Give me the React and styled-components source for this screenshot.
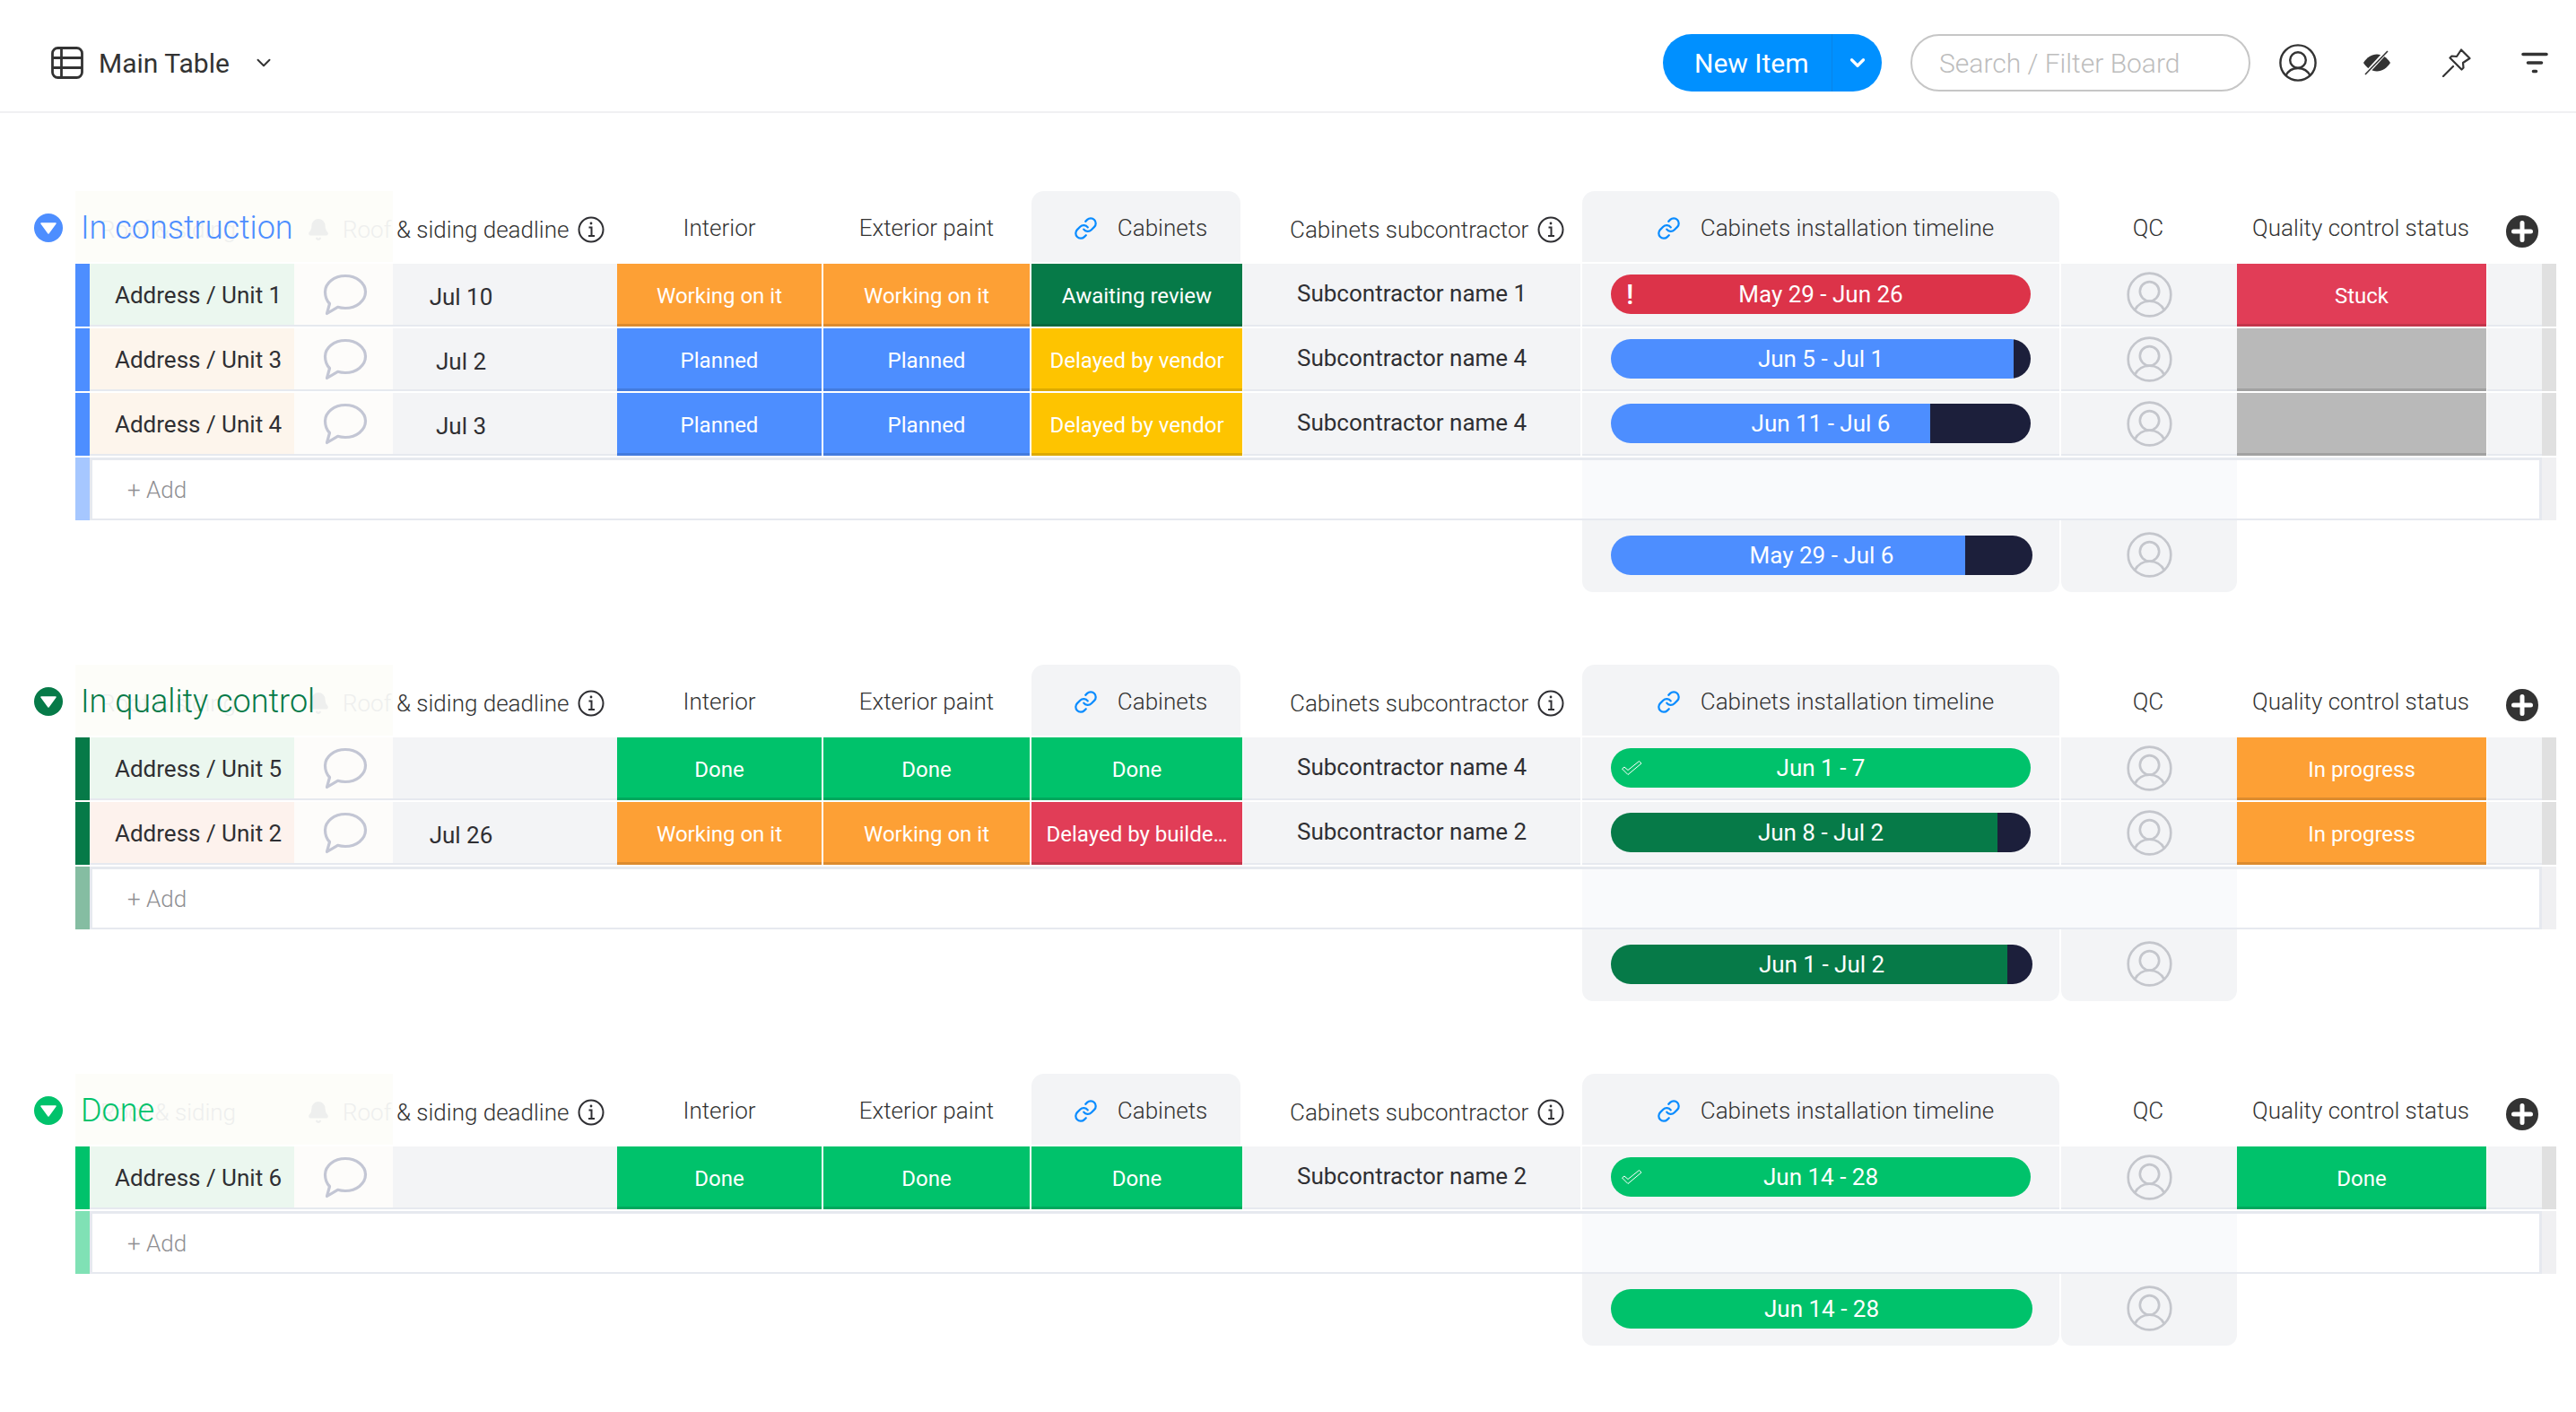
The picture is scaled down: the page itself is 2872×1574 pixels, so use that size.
import styled, { createGlobalStyle } from "styled-components";
import { Bell, ChevronDown, Link } from "lucide-react";

const COLUMNS = "84px 16px 228px 110px 250px 230px 232px 235px 379px 534px 196px 278px 62px 16px";

const BLUE = "#4d8eff";
const DARK_GREEN = "#067a48";
const GREEN = "#00c26b";
const ORANGE = "#fda035";
const YELLOW = "#fec400";
const RED = "#e13d57";
const GREY = "#b9b9b9";
const PILL_RED = "#dc3349";

const GlobalStyle = createGlobalStyle`
  html, body {
    margin: 0;
    background: #fff;
    font-family: Roboto, "Liberation Sans", sans-serif;
    color: #2f2f33;
  }
  * {
    box-sizing: border-box;
  }
`;

const Page = styled.div`
  width: 2872px;
  min-height: 1574px;
  overflow: hidden;
`;

const Toolbar = styled.header`
  height: 126px;
  display: flex;
  align-items: center;
  padding: 16px 31px 0 57px;
  border-bottom: 2px solid #f0f0f2;
`;

const BoardName = styled.div`
  display: flex;
  align-items: center;
  font-size: 30px;
  color: #333;
`;

const BoardLabel = styled.span`
  margin: 0 25px 0 17px;
`;

const ToolbarRight = styled.div`
  margin-left: auto;
  display: flex;
  align-items: center;
`;

const NewItem = styled.div`
  width: 244px;
  height: 64px;
  display: flex;
  align-items: center;
  border-radius: 32px;
  background: #0090ff;
  color: #fff;
  font-size: 30px;
`;

const NewItemLabel = styled.span`
  width: 189px;
  height: 100%;
  display: flex;
  align-items: center;
  padding-left: 35px;
  border-right: 1px solid #0a84e6;
`;

const NewItemArrow = styled.span`
  flex: 1;
  display: flex;
  justify-content: center;
`;

const SearchBox = styled.div`
  width: 379px;
  height: 64px;
  margin: 0 32px;
  padding-left: 30px;
  display: flex;
  align-items: center;
  border: 2px solid #c6c6c6;
  border-radius: 32px;
  color: #bdbdbd;
  font-size: 30px;
  font-weight: 300;
`;

const ToolIcon = styled.span`
  width: ${(props) => props.$w}px;
  margin-right: ${(props) => props.$gap || 0}px;
  display: flex;
`;

const Board = styled.main`
  padding-top: 87px;
`;

const Group = styled.section`
  margin-bottom: 81px;
`;

const Grid = styled.div`
  display: grid;
  grid-template-columns: ${COLUMNS};
`;

const HeaderRow = styled(Grid)`
  height: 79px;
  margin-bottom: 2px;
  font-size: 26px;
  font-weight: 300;
  color: #333;
`;

const Collapse = styled.div`
  width: 32px;
  height: 32px;
  margin: 25px 0 0 38px;
  border-radius: 50%;
  background: ${(props) => props.$color};
  display: flex;
  align-items: center;
  justify-content: center;
`;

const TitleCell = styled.div`
  grid-column: 2 / 5;
  position: relative;
  background: #fdfdf9;
  padding: 18px 0 0 6px;
`;

const Title = styled.h2`
  position: relative;
  margin: 0;
  font-size: 36px;
  font-weight: 300;
  line-height: 46px;
  white-space: nowrap;
  color: ${(props) => props.$color};
`;

const Ghost = styled.div`
  position: absolute;
  inset: 0;
  padding: 25px 0 0 28px;
  display: flex;
  align-items: flex-start;
  overflow: hidden;
  font-size: 26px;
  font-weight: 300;
  line-height: 36px;
  color: #eeefee;
  white-space: nowrap;
`;

const GhostRight = styled.span`
  margin-left: auto;
  display: flex;
  align-items: center;
  gap: 14px;
  width: 96px;
  flex-shrink: 0;

  svg {
    flex-shrink: 0;
  }
`;

const HeaderCell = styled.div`
  display: flex;
  align-items: center;
  justify-content: ${(props) => props.$align || "center"};
  gap: ${(props) => props.$gap || 0}px;
  padding: ${(props) => props.$pad || "3px 0 0"};
  white-space: nowrap;
  margin-right: 2px;
`;

const Tab = styled(HeaderCell)`
  background: #f3f4f6;
  border-radius: 14px 14px 0 0;
  gap: 22px;
  padding: 3px 0 0 10px;
`;

const PlusCell = styled.div`
  grid-column: 13;
  display: flex;
  justify-content: flex-end;
  padding: 27px 4px 0 0;
`;

const Row = styled(Grid)`
  height: 70px;
  margin-bottom: 2px;
  font-size: 26px;
`;

const Bar = styled.div`
  grid-column: 2;
  background: ${(props) => props.$color};
`;

const NameCell = styled.div`
  display: flex;
  align-items: center;
  padding-left: 28px;
  background: ${(props) => props.$tint};
  box-shadow: inset 0 -2px 0 #e6e9ef;
  white-space: nowrap;
`;

const CommentCell = styled.div`
  display: flex;
  align-items: center;
  padding-left: 32px;
  background: #fdfcfa;
  box-shadow: inset 0 -2px 0 #e6e9ef;
`;

const GreyCell = styled.div`
  display: flex;
  align-items: center;
  background: #f3f4f6;
  box-shadow: inset 0 -2px 0 #e6e9ef;
`;

const DateCell = styled(GreyCell)`
  justify-content: center;
  padding: 3px 98px 0 0;
`;

const SubCell = styled(GreyCell)`
  margin: 0 2px 0 1px;
  padding: 0 0 4px 60px;
`;

const TimelineCell = styled(GreyCell)`
  padding: 0 32px 2px;
  margin-right: 2px;
`;

const QcCell = styled(GreyCell)`
  justify-content: center;
  padding-bottom: 2px;
`;

const TailCell = styled(GreyCell)`
  margin-left: 1px;
`;

const ScrollEdge = styled.div`
  background: ${(props) => props.$color || "#e0e0e0"};
`;

const Status = styled.div`
  display: flex;
  align-items: center;
  justify-content: center;
  margin-right: ${(props) => (props.$flush ? 0 : 2)}px;
  padding-top: 2px;
  background: ${(props) => props.$color};
  box-shadow: inset 0 -3px 0 rgba(0, 0, 0, 0.13);
  color: #fff;
  font-size: 24px;
  white-space: nowrap;
`;

const Pill = styled.div`
  position: relative;
  width: 100%;
  height: 44px;
  display: flex;
  align-items: center;
  justify-content: center;
  border-radius: 22px;
  background: ${(props) =>
    props.$fill
      ? `linear-gradient(90deg, ${props.$color} ${props.$fill}%, #1c1f3b ${props.$fill}%)`
      : props.$color};
  color: #fff;
  font-size: 26px;
`;

const PillMark = styled.span`
  position: absolute;
  left: ${(props) => props.$left}px;
  top: 50%;
  transform: translateY(-50%);
  display: flex;
  font-size: 32px;
  font-weight: 500;
`;

const AddRow = styled(Grid)`
  height: 70px;
  font-size: 26px;
  font-weight: 300;
  color: #8f8f93;
`;

const AddMain = styled.div`
  grid-column: 3 / 10;
  display: flex;
  align-items: center;
  padding-left: 39px;
  border: solid #e6e9ef;
  border-width: 3px 0 2px 3px;
`;

const AddTint = styled.div`
  grid-column: 10 / 12;
  background: #f9fafc;
  border: solid #e6e9ef;
  border-width: 3px 0 2px;
`;

const AddEnd = styled.div`
  grid-column: 12 / 14;
  border: solid #e6e9ef;
  border-width: 3px 3px 2px 0;
`;

const SummaryRow = styled(Grid)`
  height: 80px;
`;

const SummaryTimeline = styled.div`
  grid-column: 10;
  margin-right: 2px;
  padding: 0 30px 3px 32px;
  display: flex;
  align-items: center;
  background: #f3f4f6;
  border-radius: 0 0 12px 12px;
`;

const SummaryQc = styled(SummaryTimeline)`
  grid-column: 11;
  margin: 0;
  padding: 0 0 3px;
  justify-content: center;
`;

const TableIcon = () => (
  <svg width="36" height="36" viewBox="0 0 36 36" fill="none" stroke="#333" strokeWidth="2.8">
    <rect x="1.5" y="1.5" width="33" height="33" rx="6" />
    <path d="M11.500 1.500v33M1.500 12.500h33M1.500 23.500h33" />
  </svg>
);

const UserIcon = ({ size = 42, color = "#333", width = 2.4 }) => (
  <svg width={size} height={size} viewBox="0 0 42 42" fill="none" stroke={color} strokeWidth={width}>
    <circle cx="21" cy="21" r="19.6" />
    <circle cx="21" cy="18" r="8.8" />
    <path d="M7.300 35.500C10 30 15 27 21 27s11 3 13.700 8.500" />
  </svg>
);

const EyeOffIcon = () => (
  <svg width="32" height="28" viewBox="0 0 32 28">
    <path d="M1 14C5 8 10 4.500 16 4.500S27 8 31 14c-4 6-9 9.500-15 9.500S5 20 1 14z" fill="#333" />
    <path d="M27 1L4 26" stroke="#fff" strokeWidth="4.500" />
    <path d="M28 1L3 27" stroke="#333" strokeWidth="1.600" />
  </svg>
);

const PinIcon = () => (
  <svg width="32" height="32" viewBox="0 0 32 32" fill="none" stroke="#333" strokeWidth="2.200" strokeLinejoin="round" strokeLinecap="round">
    <path d="M1 31l11-11" />
    <path d="M21 1.500l9.500 9.500-7.500 5 .5 5.500-2 2-13-13 2-2 5.500.5z" />
  </svg>
);

const FilterIcon = () => (
  <svg width="30" height="24" viewBox="0 0 30 24" fill="none" stroke="#333" strokeWidth="3.600" strokeLinecap="round">
    <path d="M2 2.500h26M7.500 12h15M13.500 21.500h3" />
  </svg>
);

const InfoIcon = () => (
  <svg width="30" height="30" viewBox="0 0 30 30" fill="none" stroke="#2f2f33" strokeWidth="2">
    <circle cx="15" cy="15" r="13.500" />
    <path d="M12.500 12.500H15.500V22M12 22h7" />
    <circle cx="15" cy="8" r="1.400" fill="#2f2f33" stroke="none" />
  </svg>
);

const PlusIcon = () => (
  <svg width="36" height="36" viewBox="0 0 36 36">
    <circle cx="18" cy="18" r="18" fill="#333" />
    <path d="M18 8.500v19M8.500 18h19" stroke="#fff" strokeWidth="5" strokeLinecap="round" />
  </svg>
);

const CommentIcon = () => (
  <svg width="50" height="48" viewBox="0 0 50 48" fill="none" stroke="#c3c6d4" strokeWidth="3.200" strokeLinejoin="round">
    <path d="M25 2.500c12.500 0 22.500 7.800 22.500 17.800S37.500 38.500 25 38.500c-3 0-6-.4-8.500-1.200L4.500 44.500l3-11C4 30 2.500 25.500 2.500 20.300 2.500 10.300 12.500 2.500 25 2.500z" />
  </svg>
);

const CheckIcon = () => (
  <svg width="24" height="18" viewBox="0 0 24 18" fill="none" stroke="#fff" strokeWidth="1" strokeLinejoin="round">
    <path d="M1.500 10l2.500-2 4 3.500L20.500 1.500l2.500 2.500L8 16.500z" />
  </svg>
);

const Arrow = () => (
  <svg width="18" height="14" viewBox="0 0 18 14">
    <path d="M1 2h16L9 13z" fill="#fff" stroke="#fff" strokeWidth="1.500" strokeLinejoin="round" />
  </svg>
);

const Avatar = () => <UserIcon size={51} color="#c4c6cc" width={2.2} />;

const groups = [
  {
    title: "In construction",
    color: BLUE,
    addColor: "#a6c7ff",
    rows: [
      {
        name: "Address / Unit 1",
        tint: "#ebf7ef",
        date: "Jul 10",
        interior: ["Working on it", ORANGE],
        exterior: ["Working on it", ORANGE],
        cabinets: ["Awaiting review", DARK_GREEN],
        sub: "Subcontractor name 1",
        pill: { text: "May 29 - Jun 26", color: PILL_RED, mark: "!" },
        qc: ["Stuck", RED],
      },
      {
        name: "Address / Unit 3",
        tint: "#fdf5ec",
        date: "Jul 2",
        interior: ["Planned", BLUE],
        exterior: ["Planned", BLUE],
        cabinets: ["Delayed by vendor", YELLOW],
        sub: "Subcontractor name 4",
        pill: { text: "Jun 5 - Jul 1", color: BLUE, fill: 96 },
        qc: ["", GREY],
      },
      {
        name: "Address / Unit 4",
        tint: "#fdf5ec",
        date: "Jul 3",
        interior: ["Planned", BLUE],
        exterior: ["Planned", BLUE],
        cabinets: ["Delayed by vendor", YELLOW],
        sub: "Subcontractor name 4",
        pill: { text: "Jun 11 - Jul 6", color: BLUE, fill: 76 },
        qc: ["", GREY],
      },
    ],
    summary: { text: "May 29 - Jul 6", color: BLUE, fill: 84 },
  },
  {
    title: "In quality control",
    color: DARK_GREEN,
    addColor: "#85bda2",
    rows: [
      {
        name: "Address / Unit 5",
        tint: "#ebf7ef",
        date: "",
        interior: ["Done", GREEN],
        exterior: ["Done", GREEN],
        cabinets: ["Done", GREEN],
        sub: "Subcontractor name 4",
        pill: { text: "Jun 1 - 7", color: GREEN, check: true },
        qc: ["In progress", ORANGE],
      },
      {
        name: "Address / Unit 2",
        tint: "#fdf2ed",
        date: "Jul 26",
        interior: ["Working on it", ORANGE],
        exterior: ["Working on it", ORANGE],
        cabinets: ["Delayed by builde…", RED],
        sub: "Subcontractor name 2",
        pill: { text: "Jun 8 - Jul 2", color: DARK_GREEN, fill: 92 },
        qc: ["In progress", ORANGE],
      },
    ],
    summary: { text: "Jun 1 - Jul 2", color: DARK_GREEN, fill: 94 },
  },
  {
    title: "Done",
    color: GREEN,
    addColor: "#80e1b5",
    rows: [
      {
        name: "Address / Unit 6",
        tint: "#ebf7ef",
        date: "",
        interior: ["Done", GREEN],
        exterior: ["Done", GREEN],
        cabinets: ["Done", GREEN],
        sub: "Subcontractor name 2",
        pill: { text: "Jun 14 - 28", color: GREEN, check: true },
        qc: ["Done", GREEN],
      },
    ],
    summary: { text: "Jun 14 - 28", color: GREEN },
  },
];

const TimelinePill = ({ pill }) => (
  <Pill $color={pill.color} $fill={pill.fill}>
    {pill.mark && <PillMark $left={17}>{pill.mark}</PillMark>}
    {pill.check && (
      <PillMark $left={11}>
        <CheckIcon />
      </PillMark>
    )}
    {pill.text}
  </Pill>
);

const GroupHead = ({ group }) => (
  <HeaderRow>
    <Collapse $color={group.color}>
      <Arrow />
    </Collapse>
    <TitleCell>
      <Ghost>
        Roof &amp; siding
        <GhostRight>
          <Bell size={26} fill="#eeefee" stroke="#eeefee" />
          Roof
        </GhostRight>
      </Ghost>
      <Title $color={group.color}>{group.title}</Title>
    </TitleCell>
    <HeaderCell $align="flex-start" $gap={10} $pad="6px 0 0 4px">
      &amp; siding deadline
      <InfoIcon />
    </HeaderCell>
    <HeaderCell>Interior</HeaderCell>
    <HeaderCell>Exterior paint</HeaderCell>
    <Tab>
      <Link size={27} color="#0a8cff" strokeWidth={2} />
      Cabinets
    </Tab>
    <HeaderCell $align="flex-start" $gap={10} $pad="6px 0 0 53px">
      Cabinets subcontractor
      <InfoIcon />
    </HeaderCell>
    <Tab>
      <Link size={27} color="#0a8cff" strokeWidth={2} />
      Cabinets installation timeline
    </Tab>
    <HeaderCell>QC</HeaderCell>
    <HeaderCell>Quality control status</HeaderCell>
    <PlusCell>
      <PlusIcon />
    </PlusCell>
  </HeaderRow>
);

const ItemRow = ({ row, color }) => (
  <Row>
    <Bar $color={color} />
    <NameCell $tint={row.tint}>{row.name}</NameCell>
    <CommentCell>
      <CommentIcon />
    </CommentCell>
    <DateCell>{row.date}</DateCell>
    <Status $color={row.interior[1]}>{row.interior[0]}</Status>
    <Status $color={row.exterior[1]}>{row.exterior[0]}</Status>
    <Status $color={row.cabinets[1]} $flush>
      {row.cabinets[0]}
    </Status>
    <SubCell>{row.sub}</SubCell>
    <TimelineCell>
      <TimelinePill pill={row.pill} />
    </TimelineCell>
    <QcCell>
      <Avatar />
    </QcCell>
    <Status $color={row.qc[1]} $flush>
      {row.qc[0]}
    </Status>
    <TailCell />
    <ScrollEdge />
  </Row>
);

const App = () => {
  return (
    <Page>
      <GlobalStyle />
      <Toolbar>
        <BoardName>
          <TableIcon />
          <BoardLabel>Main Table</BoardLabel>
          <ChevronDown size={26} color="#333" strokeWidth={1.8} />
        </BoardName>
        <ToolbarRight>
          <NewItem>
            <NewItemLabel>New Item</NewItemLabel>
            <NewItemArrow>
              <ChevronDown size={26} color="#fff" strokeWidth={3} />
            </NewItemArrow>
          </NewItem>
          <SearchBox>Search / Filter Board</SearchBox>
          <ToolIcon $w={42} $gap={51}>
            <UserIcon />
          </ToolIcon>
          <ToolIcon $w={32} $gap={57}>
            <EyeOffIcon />
          </ToolIcon>
          <ToolIcon $w={32} $gap={56}>
            <PinIcon />
          </ToolIcon>
          <ToolIcon $w={30}>
            <FilterIcon />
          </ToolIcon>
        </ToolbarRight>
      </Toolbar>
      <Board>
        {groups.map((group) => (
          <Group key={group.title}>
            <GroupHead group={group} />
            {group.rows.map((row) => (
              <ItemRow key={row.name} row={row} color={group.color} />
            ))}
            <AddRow>
              <Bar $color={group.addColor} />
              <AddMain>+ Add</AddMain>
              <AddTint />
              <AddEnd />
              <ScrollEdge $color="#f0f0f2" />
            </AddRow>
            <SummaryRow>
              <SummaryTimeline>
                <TimelinePill pill={group.summary} />
              </SummaryTimeline>
              <SummaryQc>
                <Avatar />
              </SummaryQc>
            </SummaryRow>
          </Group>
        ))}
      </Board>
    </Page>
  );
};

export default App;
